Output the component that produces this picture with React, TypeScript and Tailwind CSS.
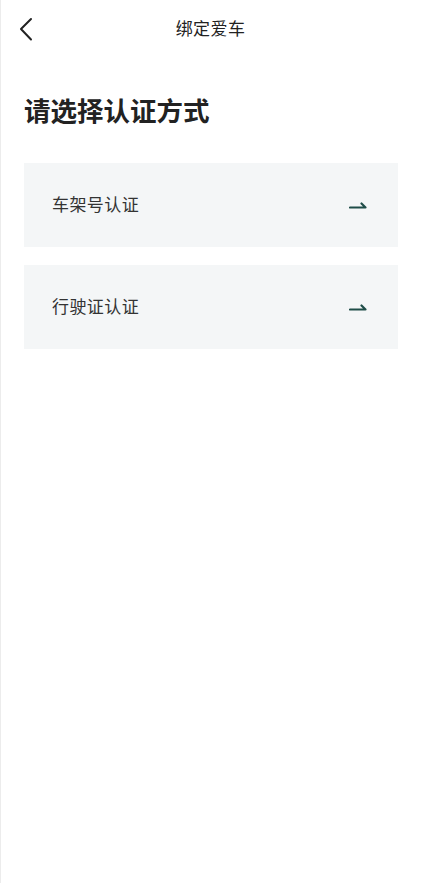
const methods = ['车架号认证', '行驶证认证']

function Harpoon() {
  return (
    <svg width="18" height="8" viewBox="0 0 18 8" fill="none" className="shrink-0">
      <path d="M1 6.5H16.5L12.5 2.5" stroke="#1f4d48" strokeWidth="2.2" strokeLinecap="round" strokeLinejoin="round" />
    </svg>
  )
}

export default function App() {
  return (
    <div
      className="min-h-[883px] w-full bg-white shadow-[inset_1px_0_0_#ececec]"
      style={{ fontFamily: '"Noto Sans", "Noto Sans CJK SC", sans-serif' }}
    >
      <header className="relative h-[58px] flex items-center justify-center">
        <button className="absolute left-[18px] top-[17px] text-[#222]">
          <svg width="16" height="24" viewBox="0 0 16 24" fill="none">
            <path d="M13 2L3 12L13 22.5" stroke="currentColor" strokeWidth="2" strokeLinecap="round" strokeLinejoin="round" />
          </svg>
        </button>
        <h1 className="text-[17px] text-[#222] tracking-wide">绑定爱车</h1>
      </header>

      <div className="pl-6 pr-[23px]">
        <h2 className="mt-[40px] text-[26.5px] font-semibold text-[#222] leading-none">请选择认证方式</h2>

        <div className="mt-[38px] flex flex-col gap-[18px]">
          {methods.map((m) => (
            <div key={m} className="h-[84px] bg-[#f4f6f7] flex items-center justify-between pl-7 pr-[31px]">
              <span className="text-[17px] text-[#333] tracking-wide">{m}</span>
              <Harpoon />
            </div>
          ))}
        </div>
      </div>
    </div>
  )
}
